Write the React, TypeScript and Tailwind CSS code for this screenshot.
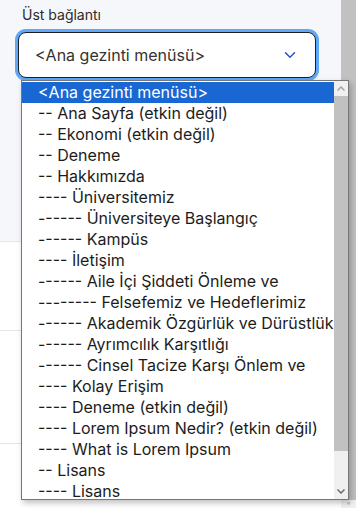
import { ChevronDown } from "lucide-react";

const options = [
  "<Ana gezinti menüsü>",
  "-- Ana Sayfa (etkin değil)",
  "-- Ekonomi (etkin değil)",
  "-- Deneme",
  "-- Hakkımızda",
  "---- Üniversitemiz",
  "------ Üniversiteye Başlangıç",
  "------ Kampüs",
  "---- İletişim",
  "------ Aile İçi Şiddeti Önleme ve",
  "-------- Felsefemiz ve Hedeflerimiz",
  "------ Akademik Özgürlük ve Dürüstlük",
  "------ Ayrımcılık Karşıtlığı",
  "------ Cinsel Tacize Karşı Önlem ve",
  "---- Kolay Erişim",
  "---- Deneme (etkin değil)",
  "---- Lorem Ipsum Nedir? (etkin değil)",
  "---- What is Lorem Ipsum",
  "-- Lisans",
  "---- Lisans",
];

const App = () => {
  return (
    <div className="relative flex h-[508px] w-[356px] overflow-hidden bg-white font-['Inter',sans-serif]">
      {/* Page */}
      <div className="flex w-[341px] flex-col">
        <section className="h-[242px] border-b border-[#e6e6e6] bg-[#f6f7fb] pl-[18px] pt-[5px]">
          <label className="block pl-[4px] text-[14px] leading-[20px] text-[#2c2c2c]">
            Üst bağlantı
          </label>
          <div className="mt-[7px] flex h-[46px] w-[298px] items-center justify-between rounded-[8px] border-[1.5px] border-[#1e1e1e] bg-white pl-[16px] pr-[16px] ring-[3px] ring-[#5ea8f7]">
            <span className="text-[16px] text-[#333]">&lt;Ana gezinti menüsü&gt;</span>
            <ChevronDown className="h-[18px] w-[18px] text-[#2650d6]" strokeWidth={2} />
          </div>
        </section>
        <section className="h-[89px] border-b border-[#e6e6e6]" />
        <section className="h-[113px] border-b border-[#e6e6e6]" />
      </div>

      {/* Page scrollbar */}
      <div className="flex w-[15px] flex-col justify-end bg-[#c1c1c1]">
        <div className="flex h-[8px] items-center justify-center bg-[#f1f1f1] text-[8px] leading-none text-[#a3a3a3]">
          ˅
        </div>
      </div>

      {/* Open dropdown */}
      <div className="absolute left-[21px] top-[80px] flex h-[420px] w-[328px] border border-[#767676] bg-white shadow-[2px_3px_6px_rgba(0,0,0,0.25)]">
        <ul className="flex-1 overflow-hidden pt-px">
          {options.map((o, i) => (
            <li
              key={i}
              className={
                i === 0
                  ? "h-[21px] whitespace-nowrap bg-[#1967d2] pl-[16px] text-[16px] leading-[21px] text-white"
                  : "h-[21px] whitespace-nowrap pl-[16px] text-[16px] leading-[21px] text-[#1c1c1c]"
              }
            >
              {o}
            </li>
          ))}
        </ul>
        <div className="flex w-[14px] flex-col bg-[#f0f0f0]">
          <div className="flex h-[15px] items-center justify-center">
            <svg width="8" height="5" viewBox="0 0 8 5">
              <path d="M0.5 4.5 L4 1 L7.5 4.5" fill="none" stroke="#a3a3a3" strokeWidth="1.5" />
            </svg>
          </div>
          <div className="h-[355px] bg-[#c1c1c1]" />
          <div className="flex-1" />
          <div className="flex h-[15px] items-center justify-center">
            <svg width="8" height="5" viewBox="0 0 8 5">
              <path d="M0.5 0.5 L4 4 L7.5 0.5" fill="none" stroke="#6b6b6b" strokeWidth="1.5" />
            </svg>
          </div>
        </div>
      </div>
    </div>
  );
};

export default App;
